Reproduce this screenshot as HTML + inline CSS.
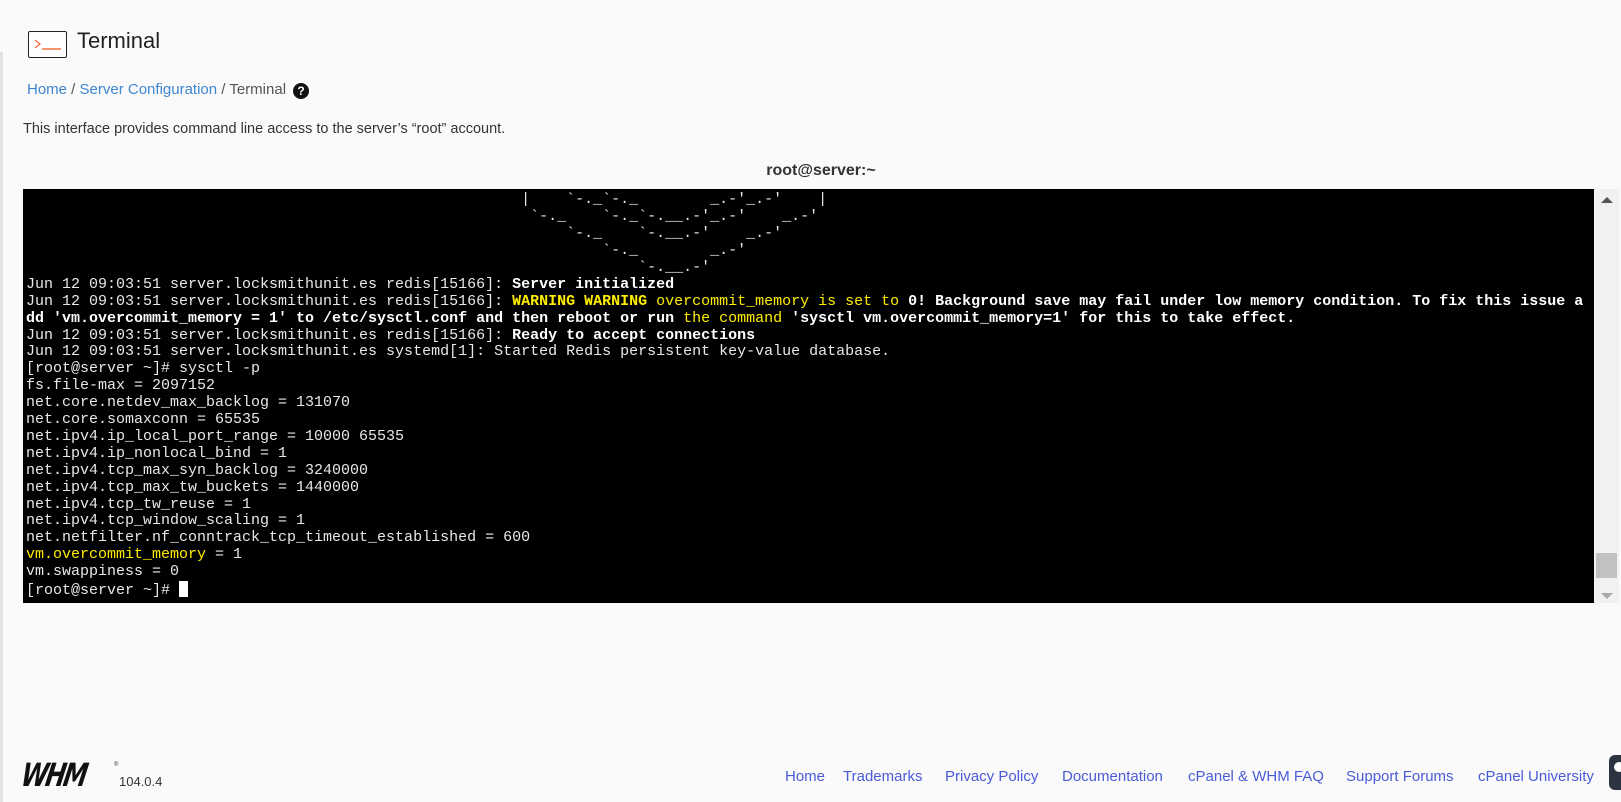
<!DOCTYPE html>
<html><head><meta charset="utf-8"><style>
*{margin:0;padding:0;box-sizing:border-box}
html,body{width:1621px;height:802px;overflow:hidden;background:#fafafa;font-family:"Liberation Sans",sans-serif;color:#333;position:relative}
.a{position:absolute;white-space:nowrap}
.lb{position:absolute;left:0;top:52px;width:3px;height:750px;background:#e2e2e2}
.term{position:absolute;left:23px;top:189px;width:1571px;height:414px;background:#000;overflow:hidden}
.tx{position:absolute;left:3px;bottom:3px;font-family:"Liberation Mono",monospace;font-size:15px;line-height:16.9px;color:#e8e8e8;white-space:pre}
.b{font-weight:bold;color:#fff}.y{color:#ffee00}.yb{color:#ffee00;font-weight:bold}
.cur{display:inline-block;width:9px;height:16px;background:#fff;vertical-align:-3px}
.sb{position:absolute;left:1594px;top:189px;width:25px;height:414px;background:#f1f1f1}
.ft a{position:absolute;top:768px;color:#4a5bd8;font-size:15px;text-decoration:none;white-space:nowrap}
</style></head><body>
<div class="lb"></div>
<div class="a" style="left:28px;top:31px;width:39px;height:27px;border:1.5px solid #222;border-radius:2px;background:#fff"></div>
<svg class="a" style="left:33px;top:38px" width="30" height="14"><path d="M2 2 L7 6 L2 10" stroke="#f07040" stroke-width="1.3" fill="none"/><path d="M9 11 H28" stroke="#f07040" stroke-width="1.5"/></svg>
<div class="a" style="left:77px;top:28px;font-size:22px;color:#222">Terminal</div>
<div class="a" style="left:27px;top:81px;font-size:15px;color:#555"><span style="color:#3f86d0">Home</span> / <span style="color:#3f86d0">Server Configuration</span> / Terminal</div>
<div class="a" style="left:293px;top:83px;width:16px;height:16px;border-radius:50%;background:#111;color:#fff;font-size:12px;font-weight:bold;text-align:center;line-height:16px">?</div>
<div class="a" style="left:23px;top:121px;font-size:14.5px;color:#333">This interface provides command line access to the server’s “root” account.</div>
<div class="a" style="left:0;width:1642px;top:162px;text-align:center;font-size:16px;font-weight:bold;color:#333">root@server:~</div>
<div class="term"><div class="tx">                                                       |    `-._`-._        _.-'_.-'    |
                                                        `-._    `-._`-.__.-'_.-'    _.-'
                                                            `-._    `-.__.-'    _.-'
                                                                `-._        _.-'
                                                                    `-.__.-'
Jun 12 09:03:51 server.locksmithunit.es redis[15166]: <span class="b">Server initialized</span>
Jun 12 09:03:51 server.locksmithunit.es redis[15166]: <span class="yb">WARNING WARNING</span><span class="y"> overcommit_memory is set to </span><span class="b">0! Background save may fail under low memory condition. To fix this issue a</span>
<span class="b">dd 'vm.overcommit_memory = 1' to /etc/sysctl.conf and then reboot or run </span><span class="y">the command</span><span class="b"> 'sysctl vm.overcommit_memory=1' for this to take effect.</span>
Jun 12 09:03:51 server.locksmithunit.es redis[15166]: <span class="b">Ready to accept connections</span>
Jun 12 09:03:51 server.locksmithunit.es systemd[1]: Started Redis persistent key-value database.
[root@server ~]# sysctl -p
fs.file-max = 2097152
net.core.netdev_max_backlog = 131070
net.core.somaxconn = 65535
net.ipv4.ip_local_port_range = 10000 65535
net.ipv4.ip_nonlocal_bind = 1
net.ipv4.tcp_max_syn_backlog = 3240000
net.ipv4.tcp_max_tw_buckets = 1440000
net.ipv4.tcp_tw_reuse = 1
net.ipv4.tcp_window_scaling = 1
net.netfilter.nf_conntrack_tcp_timeout_established = 600
<span class="y">vm.overcommit_memory</span> = 1
vm.swappiness = 0
[root@server ~]# <span class="cur"></span></div></div>
<div class="sb">
<div class="a" style="left:7px;top:8px;border-left:6px solid transparent;border-right:6px solid transparent;border-bottom:6px solid #555"></div>
<div class="a" style="left:2px;top:364px;width:21px;height:25px;background:#c1c1c1"></div>
<div class="a" style="left:7px;top:404px;border-left:6px solid transparent;border-right:6px solid transparent;border-top:6px solid #aaa"></div>
</div>
<div class="a" style="left:25px;top:757px;font-size:32px;font-weight:900;font-style:italic;color:#111;letter-spacing:-3px;transform-origin:left top;transform:skewX(-10deg) scaleX(0.75);font-family:'DejaVu Sans',sans-serif;line-height:36px">WHM</div>
<div class="a" style="left:114px;top:762px;font-size:6px;color:#333">®</div>
<div class="a" style="left:119px;top:774px;font-size:13px;color:#333">104.0.4</div>
<div class="ft">
<a style="left:785px">Home</a><a style="left:843px">Trademarks</a><a style="left:945px">Privacy Policy</a><a style="left:1062px">Documentation</a><a style="left:1188px">cPanel &amp; WHM FAQ</a><a style="left:1346px">Support Forums</a><a style="left:1478px">cPanel University</a>
</div>
<div class="a" style="left:1609px;top:755px;width:30px;height:35px;border-radius:6px;background:#2b3440"></div>
<div class="a" style="left:1614px;top:762px;width:10px;height:10px;border-radius:50%;background:#fff"></div>
</body></html>
